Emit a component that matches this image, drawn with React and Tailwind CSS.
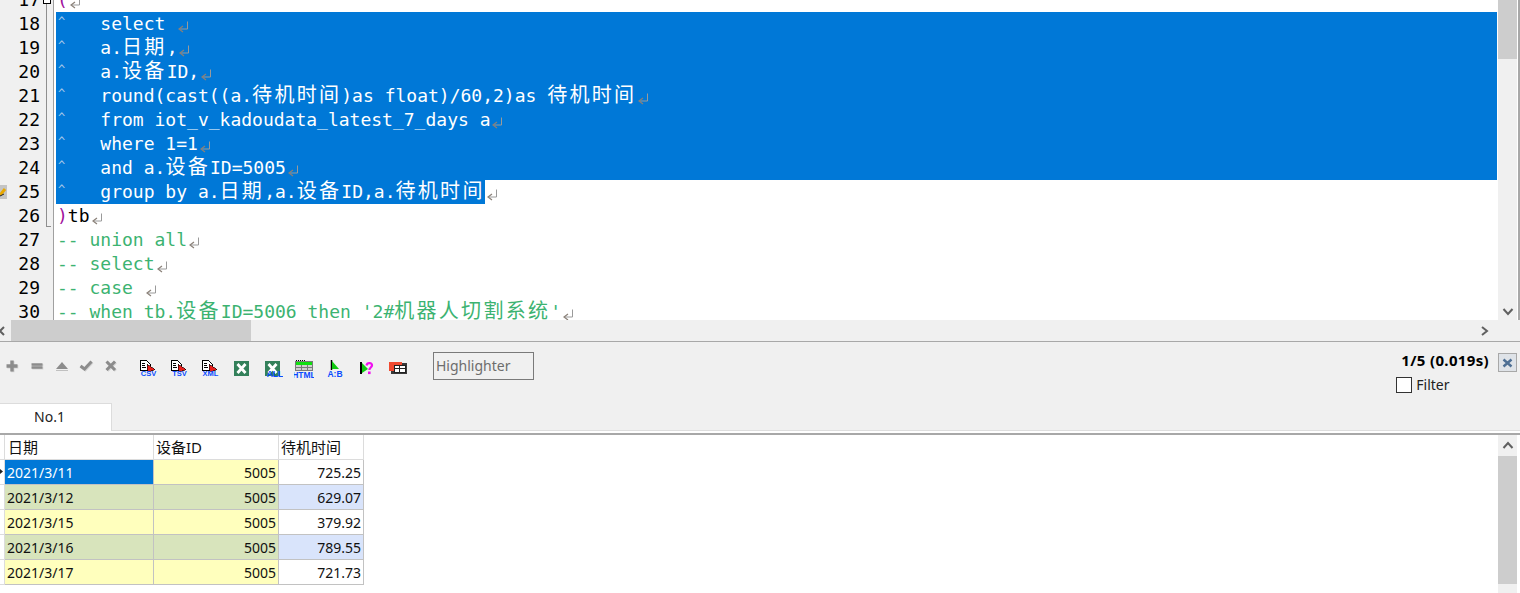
import React from "react";

const CJK = /([\u4e00-\u9fff]+)/;

function Code({ text }) {
  return text.split(CJK).map((part, i) =>
    CJK.test(part) ? (
      <span key={i} className="text-[20px] leading-[0] tracking-[2.3px] font-['Noto_Sans_CJK_SC',sans-serif]">{part}</span>
    ) : (
      <span key={i}>{part}</span>
    )
  );
}

function Cr() {
  return (
    <svg width="13" height="13" viewBox="0 0 13 13" className="inline-block ml-[1px] align-[-3px]" fill="none">
      <path d="M10.5 1.5V9H3" stroke="#9a9a9a" strokeWidth="1" />
      <path d="M6 6L2 9L6 12" stroke="#8a8078" strokeWidth="1.2" />
    </svg>
  );
}

const selected = [
  "    select ",
  "    a.日期,",
  "    a.设备ID,",
  "    round(cast((a.待机时间)as float)/60,2)as 待机时间",
  "    from iot_v_kadoudata_latest_7_days a",
  "    where 1=1",
  "    and a.设备ID=5005",
];

const comments = ["-- union all", "-- select", "-- case "];

function Line({ children }) {
  return <div className="h-6 leading-6 whitespace-pre pl-[1px]">{children}</div>;
}

function Caret({ text }) {
  return (
    <div className="relative h-6 leading-6 whitespace-pre pl-[1px] text-white">
      <span className="absolute left-[2px] top-[-2px] text-[12px] text-[#a9c8e8]">^</span>
      <Code text={text} />
      <Cr />
    </div>
  );
}

function FileIcon({ label }) {
  return (
    <svg width="20" height="18" viewBox="0 0 20 18" shapeRendering="crispEdges">
      <path d="M1.5 .5H7.5L11.5 4.5V10.5H1.5Z" fill="#fff" stroke="#000" />
      <path d="M3 3H6M3 5H6M3 7H7" stroke="#000" />
      <path d="M8 4L16 9.5L10 12L8 10Z" fill="#e8201c" stroke="#000" strokeWidth=".6" />
      <text x="9.5" y="16" textAnchor="middle" fontSize="7.5" fontWeight="700" fill="#0a4cff" fontFamily="'Liberation Sans',sans-serif">{label}</text>
    </svg>
  );
}

function Excel({ all }) {
  return (
    <svg width="20" height="18" viewBox="0 0 20 18">
      <rect x="2" y="1" width="15" height="15" fill="#33805a" />
      <path d="M5.5 4L13.5 13M13.5 4L5.5 13" stroke="#fff" strokeWidth="2.8" />
      {all && <text x="12" y="17" textAnchor="middle" fontSize="8.5" fontWeight="700" fill="#0a4cff" fontFamily="'Liberation Sans',sans-serif">ALL</text>}
    </svg>
  );
}

function Dim({ d, w = 3 }) {
  return (
    <svg width="16" height="16" viewBox="0 0 16 16" fill="none">
      <path d={d} stroke="#d2d2d2" strokeWidth={w} transform="translate(.8 .8)" />
      <path d={d} stroke="#8c8c8c" strokeWidth={w} />
    </svg>
  );
}

function Slot({ children, className }) {
  return <div className={`flex items-center justify-center ${className}`}>{children}</div>;
}

const rows = [
  ["2021/3/11", "5005", "725.25", "bg-[#0078d7] text-white", "bg-[#ffffbd]", "bg-white"],
  ["2021/3/12", "5005", "629.07", "bg-[#d8e4bc]", "bg-[#d8e4bc]", "bg-[#d9e4fb]"],
  ["2021/3/15", "5005", "379.92", "bg-[#ffffbd]", "bg-[#ffffbd]", "bg-white"],
  ["2021/3/16", "5005", "789.55", "bg-[#d8e4bc]", "bg-[#d8e4bc]", "bg-[#d9e4fb]"],
  ["2021/3/17", "5005", "721.73", "bg-[#ffffbd]", "bg-[#ffffbd]", "bg-white"],
];

const cell = "h-[25px] leading-[25px] border-r border-b border-[#c2c2c2] text-[14px] text-[#111]";
const head = "h-[25px] border-r border-b border-[#dcdcdc] text-[15px] leading-[24px] text-[#111]";

export default function App() {
  return (
    <div className="w-[1520px] h-[593px] overflow-hidden bg-[#f0f0f0] flex flex-col font-['Noto_Sans','Noto_Sans_CJK_SC',sans-serif]">
      {/* editor */}
      <div className="relative h-[320px] flex overflow-hidden bg-white shrink-0">
        <div className="w-[46px] shrink-0 bg-[#f0f0f0] -mt-3 text-right pr-[6px] font-['DejaVu_Sans_Mono',monospace] text-[18px] text-black">
          {Array.from({ length: 14 }, (_, i) => (
            <div key={i} className="h-6 leading-6">{17 + i}</div>
          ))}
        </div>
        <div className="w-[8px] shrink-0 bg-[#f0f0f0] border-r-[1px] border-[#a0a0a0]">
          <div className="w-[5px] h-[227px] border-l border-b border-[#8e8e8e]" />
        </div>
        <div className="w-[2px] shrink-0 bg-white" />
        <div className="flex-1 min-w-0 -mt-3 mr-[1px] font-['DejaVu_Sans_Mono',monospace] text-[18px] text-black">
          <Line>
            <span className="text-[#a0109c]">(</span>
            <Cr />
          </Line>
          <div className="bg-[#0078d7]">
            {selected.map((t) => (
              <Caret key={t} text={t} />
            ))}
          </div>
          <div className="bg-[#0078d7] w-[429px] h-6">
            <Caret text="    group by a.日期,a.设备ID,a.待机时间" />
          </div>
          <Line>
            <span className="text-[#a0109c]">)</span>tb
            <Cr />
          </Line>
          <div className="text-[#3cb371]">
            {comments.map((t) => (
              <Line key={t}>
                {t}
                <Cr />
              </Line>
            ))}
            <Line>
              <Code text="-- when tb.设备ID=5006 then '2#机器人切割系统'" />
              <Cr />
            </Line>
          </div>
        </div>
        <div className="w-[22px] shrink-0 bg-white flex">
          <div className="w-[19px] bg-[#f0f0f0] flex flex-col items-center">
            <div className="w-full h-[59px] bg-[#cdcdcd]" />
            <div className="mt-auto mb-[3px] text-[#606060]">
              <svg width="12" height="10" viewBox="0 0 12 10" fill="none">
                <path d="M1.5 2L6 7L10.5 2" stroke="#606060" strokeWidth="2" />
              </svg>
            </div>
          </div>
          <div className="w-[1px]" />
          <div className="w-[2px] bg-[#a8a8a8]" />
        </div>
        {/* fold marker and bookmark sit on top of the margin */}
        <div className="absolute left-[43px] top-[-4px] w-[8px] h-[8px] bg-white border border-black" />
        <svg className="absolute left-0 top-[185px]" width="7" height="14" viewBox="0 0 7 14">
          <rect width="7" height="14" fill="#c4c4c4" />
          <path d="M0 10L5 4" stroke="#e8a800" strokeWidth="3" />
          <path d="M0 11L4 9" stroke="#222" strokeWidth="1" />
        </svg>
      </div>

      {/* horizontal scrollbar */}
      <div className="h-[22px] shrink-0 bg-[#f0f0f0] border-b-[1px] border-[#a8a8a8] flex items-center">
        <svg className="w-[11px]" width="11" height="12" viewBox="0 0 11 12" fill="none">
          <path d="M4 2L0 6L4 10" stroke="#606060" strokeWidth="2" />
        </svg>
        <div className="w-[240px] h-full bg-[#cdcdcd]" />
        <svg className="ml-[1229px]" width="10" height="12" viewBox="0 0 10 12" fill="none">
          <path d="M2 2L7 6L2 10" stroke="#606060" strokeWidth="2" />
        </svg>
      </div>

      {/* toolbar */}
      <div className="h-[61px] shrink-0 flex">
        <div className="flex items-start pt-[10px]">
          <Slot className="w-[25px] h-[28px] ml-[-1px]"><Dim d="M8 2.5V13.5M2.5 8H13.5" w={3.4} /></Slot>
          <Slot className="w-[25px] h-[28px]"><Dim d="M2.5 6.5H13.5M2.5 9.5H13.5" w={2.4} /></Slot>
          <Slot className="w-[25px] h-[28px]">
            <svg width="14" height="12" viewBox="0 0 14 12"><path d="M7 2L13 9H1Z" fill="#8c8c8c" /><path d="M1 10.5H13" stroke="#c0c0c0" /></svg>
          </Slot>
          <Slot className="w-[24px] h-[28px]"><Dim d="M2.5 8L6.5 11L13.5 3.5" w={3} /></Slot>
          <Slot className="w-[25px] h-[28px]"><Dim d="M3.5 3.5L12 12M12 3.5L3.5 12" w={3} /></Slot>
          <div className="flex ml-[16px] gap-[11px] h-[28px] items-center pt-[6px]">
            <FileIcon label="CSV" />
            <FileIcon label="TSV" />
            <FileIcon label="XML" />
            <Excel />
            <Excel all />
            <svg width="20" height="18" viewBox="0 0 20 18" shapeRendering="crispEdges">
              <path d="M2 .5H11" stroke="#000" strokeDasharray="1 1" />
              <rect x="1.5" y="1.5" width="17" height="9" fill="#cfcfcf" stroke="#7a7a7a" />
              <rect x="2" y="2" width="16" height="3" fill="#10e010" />
              <path d="M2 7.5H18M7 5V11M13 5V11" stroke="#7a7a7a" />
              <text x="10" y="17.5" textAnchor="middle" fontSize="8.5" fontWeight="700" fill="#0a4cff" fontFamily="'Liberation Sans',sans-serif">HTML</text>
            </svg>
            <svg width="20" height="18" viewBox="0 0 20 18">
              <path d="M6.5 0V10" stroke="#000" strokeWidth="1.5" />
              <path d="M7 1L14 9H7Z" fill="#10c810" />
              <text x="10" y="16.5" textAnchor="middle" fontSize="8.5" fontWeight="700" fill="#0a4cff" fontFamily="'Liberation Sans',sans-serif">A:B</text>
            </svg>
            <svg width="20" height="18" viewBox="0 0 20 18">
              <path d="M5 2V14" stroke="#000" strokeWidth="2" />
              <path d="M6 3L12 9L6 13Z" fill="#10c810" />
              <path d="M10.5 5.5C11 2 16.5 2.5 16 5.5C15.7 7.5 13.5 7.5 13.3 10" stroke="#f010f0" strokeWidth="2.2" fill="none" />
              <rect x="12" y="11.5" width="2.6" height="2.6" fill="#f010f0" />
            </svg>
            <svg width="20" height="18" viewBox="0 0 20 18" shapeRendering="crispEdges">
              <rect x="4" y="3" width="16" height="11" fill="#3a3a3a" />
              <rect x="2" y="2" width="13" height="9" fill="#f04a30" />
              <rect x="7" y="5" width="11" height="7" fill="#fff" stroke="#222" />
              <path d="M7 8H18M12 5V12" stroke="#222" />
            </svg>
          </div>
          <input
            readOnly
            value=""
            placeholder="Highlighter"
            className="ml-[26px] w-[101px] h-[28px] border-[1px] border-[#7a7a7a] bg-[#f0f0f0] px-[2px] pb-[2px] text-[14px] leading-[24px] placeholder:text-[#6d6d6d] outline-none"
          />
        </div>
        <div className="ml-auto flex flex-col items-start pt-[8px]">
          <div className="text-[15px] tracking-[0.35px] font-bold leading-[20px] text-black ml-[5px] pr-[9px] whitespace-nowrap">1/5 (0.019s)</div>
          <label className="flex items-center gap-[4px] mt-[6px]">
            <span className="w-[16px] h-[16px] bg-white border border-[#333]" />
            <span className="text-[14px] leading-[18px] text-[#222]">Filter</span>
          </label>
        </div>
        <div className="mt-[11px] mr-[3px] w-[19px] h-[19px] border border-[#a8a8a8] bg-[#dfe3e8] flex items-center justify-center">
          <svg width="11" height="10" viewBox="0 0 11 10">
            <path d="M1.5 1.5L9.5 8.5M9.5 1.5L1.5 8.5" stroke="#4e6f94" strokeWidth="2.4" />
          </svg>
        </div>
      </div>

      {/* tabs */}
      <div className="h-[30px] shrink-0 bg-white">
        <div className="h-[28px] bg-[#f0f0f0] border-b border-[#dedede] flex">
          <div className="w-[112px] h-[28px] bg-white border-t border-r border-[#dcdcdc] pr-[12px] text-center text-[14px] leading-[26px] text-[#222]">No.1</div>
        </div>
      </div>

      {/* result grid */}
      <div className="flex-1 min-h-0 flex bg-white border-t-[2px] border-[#a8a8a8]">
        <div className="w-[364px] shrink-0">
          <div className="flex">
            <div className="w-[5px] h-[25px] border-r border-b border-[#dcdcdc] bg-white" />
            <div className={`${head} w-[149px] pl-[3px]`}>日期</div>
            <div className={`${head} w-[125px] pl-[2px]`}>设备ID</div>
            <div className={`${head} w-[85px] pl-[2px]`}>待机时间</div>
          </div>
          {rows.map((r, idx) => (
            <div key={r[0]} className="flex relative">
              <div className="w-[5px] h-[25px] border-r border-b border-[#dcdcdc] bg-white" />
              <div className={`${cell} w-[149px] pl-[2px] ${r[3]}`}>{r[0]}</div>
              <div className={`${cell} w-[125px] text-right pr-[2px] ${r[4]}`}>{r[1]}</div>
              <div className={`${cell} w-[85px] text-right pr-[2px] ${r[5]}`}>{r[2]}</div>
              {idx === 0 && (
                <svg className="absolute left-0 top-[8px]" width="3" height="7" viewBox="0 0 3 7"><path d="M0 1L3 3.5L0 6Z" fill="#222" /></svg>
              )}
            </div>
          ))}
        </div>
        <div className="flex-1" />
        <div className="w-[19px] bg-[#f0f0f0] flex flex-col items-center mr-[3px] shrink-0">
          <svg className="mt-[5px] mb-[6px]" width="12" height="10" viewBox="0 0 12 10" fill="none">
            <path d="M1.5 8L6 3L10.5 8" stroke="#606060" strokeWidth="2" />
          </svg>
          <div className="w-full h-[128px] bg-[#cdcdcd]" />
        </div>
      </div>
    </div>
  );
}
